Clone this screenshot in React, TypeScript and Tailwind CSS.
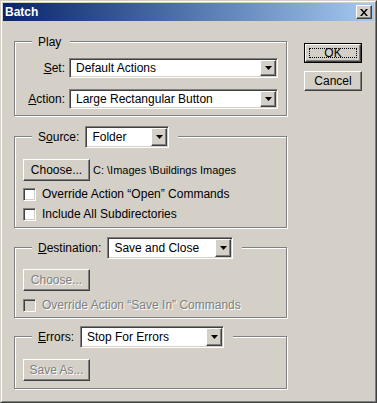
import React from "react";

const raised =
  "border border-t-white border-l-white border-r-[#404040] border-b-[#404040] shadow-[inset_-1px_-1px_0_#808080,inset_1px_1px_0_#d4d0c8] bg-[#d4d0c8]";
const sunken =
  "border border-t-[#808080] border-l-[#808080] border-r-white border-b-white shadow-[inset_1px_1px_0_#404040,inset_-1px_-1px_0_#d4d0c8]";
const grayText = "text-[#808080] [text-shadow:1px_1px_0_#fff]";

function Arrow() {
  return (
    <div className={`${raised} w-[16px] my-[1px] mr-[1px] flex items-center justify-center`}>
      <svg width="7" height="4" viewBox="0 0 7 4">
        <path d="M0 0h7L3.5 4z" fill="#000" />
      </svg>
    </div>
  );
}

function Combo({ value, className }: { value: string; className: string }) {
  return (
    <div className={`${sunken} bg-white flex ${className}`}>
      <div className="flex-1 flex items-center pl-[6px] text-[12px] text-black whitespace-nowrap overflow-hidden">
        {value}
      </div>
      <Arrow />
    </div>
  );
}

function Button({ label, disabled }: { label: string; disabled?: boolean }) {
  return (
    <div
      className={`${raised} w-[67px] h-[22px] flex items-center justify-center text-[12px] ${
        disabled ? grayText : "text-black"
      }`}
    >
      {label}
    </div>
  );
}

function Check({ label, disabled, className }: { label: string; disabled?: boolean; className: string }) {
  return (
    <div className={`flex items-center h-[16px] ml-[8px] gap-[6px] ${className}`}>
      <div
        className={`${sunken} w-[13px] h-[13px] ${disabled ? "bg-[#d4d0c8]" : "bg-white"}`}
      />
      <span className={`text-[12px] whitespace-nowrap ${disabled ? grayText : "text-black"}`}>{label}</span>
    </div>
  );
}

function Group({
  legend,
  className,
  children,
}: {
  legend: React.ReactNode;
  className: string;
  children?: React.ReactNode;
}) {
  return (
    <div className={`border border-[#808080] shadow-[inset_1px_1px_0_#fff,1px_1px_0_#fff] flex flex-col ${className}`}>
      <div className="-mt-[11px] ml-[17px] w-fit h-[22px] bg-[#d4d0c8] pl-[6px] pr-[9px] flex items-center gap-[6px] text-[12px] text-black">
        {legend}
      </div>
      {children}
    </div>
  );
}

export default function App() {
  return (
    <div className="w-[377px] h-[403px] bg-[#d4d0c8] border border-t-[#d4d0c8] border-l-[#d4d0c8] border-r-[#404040] border-b-[#404040] font-['Liberation_Sans',Arial,sans-serif] select-none">
      <div className="h-full border border-t-white border-l-white border-r-[#808080] border-b-[#808080] p-[1px] flex flex-col">
        {/* title bar */}
        <div className="h-[18px] bg-linear-to-r from-[#0a246a] to-[#a6caf0] flex items-center pl-[2px]">
          <span className="text-white font-bold text-[12px] flex-1">Batch</span>
          <div className={`${raised} w-[16px] h-[14px] mr-[2px] flex items-center justify-center`}>
            <svg width="8" height="7" viewBox="0 0 8 7">
              <path d="M0 0h2l2 2.5L6 0h2L5 3.5 8 7H6L4 4.5 2 7H0l3-3.5z" fill="#000" />
            </svg>
          </div>
        </div>

        <div className="flex">
          <div className="ml-[11px] w-[273px] flex flex-col">
            <Group legend={<span>Play</span>} className="mt-[20px] h-[75px]">
              <div className="flex items-center mt-[5px]">
                <span className="w-[50px] text-right text-[12px]">
                  <u>S</u>et:
                </span>
                <Combo value="Default Actions" className="ml-[4px] w-[209px] h-[20px]" />
              </div>
              <div className="flex items-center mt-[11px]">
                <span className="w-[50px] text-right text-[12px]">
                  <u>A</u>ction:
                </span>
                <Combo value="Large Rectangular Button" className="ml-[4px] w-[209px] h-[20px]" />
              </div>
            </Group>

            <Group
              legend={
                <>
                  <span>
                    S<u>o</u>urce:
                  </span>
                  <Combo value="Folder" className="w-[84px] h-[22px]" />
                </>
              }
              className="mt-[20px] h-[92px]"
            >
              <div className="flex items-center mt-[11px] ml-[8px]">
                <Button label="Choose..." />
                <span className="ml-[3px] text-[11px] whitespace-nowrap">C: \Images \Buildings Images</span>
              </div>
              <Check label="Override Action “Open” Commands" className="mt-[5px]" />
              <Check label="Include All Subdirectories" className="mt-[4px]" />
            </Group>

            <Group
              legend={
                <>
                  <span>
                    <u>D</u>estination:
                  </span>
                  <Combo value="Save and Close" className="w-[126px] h-[22px]" />
                </>
              }
              className="mt-[19px] h-[71px]"
            >
              <div className="flex mt-[10px] ml-[8px]">
                <Button label="Choose..." disabled />
              </div>
              <Check label="Override Action “Save In” Commands" disabled className="mt-[6px]" />
            </Group>

            <Group
              legend={
                <>
                  <span>
                    <u>E</u>rrors:
                  </span>
                  <Combo value="Stop For Errors" className="w-[144px] h-[22px]" />
                </>
              }
              className="mt-[18px] h-[53px]"
            >
              <div className="flex mt-[11px] ml-[8px]">
                <Button label="Save As..." disabled />
              </div>
            </Group>
          </div>

          <div className="ml-[17px] mt-[22px] flex flex-col gap-[8px]">
            <div className="w-[58px] h-[20px] border border-black">
              <div className={`${raised} h-full p-[3px]`}>
                <div className="h-full border border-dotted border-black flex items-center justify-center text-[12px] text-black">
                  OK
                </div>
              </div>
            </div>
            <div className={`${raised} w-[58px] h-[20px] flex items-center justify-center text-[12px] text-black`}>
              Cancel
            </div>
          </div>
        </div>
      </div>
    </div>
  );
}
